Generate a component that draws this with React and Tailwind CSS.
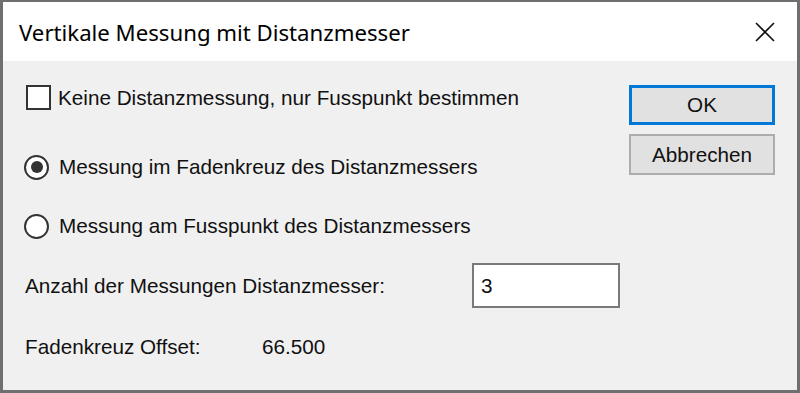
import { useState } from "react";

function Radio({ checked, onClick, children }) {
  return (
    <div className="flex items-center h-[26px] cursor-default" onClick={onClick}>
      <div className="ml-[21px] w-[25px] h-[25px] rounded-full border-2 border-[#333333] bg-white flex items-center justify-center">
        {checked && <div className="w-[12px] h-[12px] rounded-full bg-[#333333]" />}
      </div>
      <span className="ml-[10px]">{children}</span>
    </div>
  );
}

function App() {
  const [keineDistanz, setKeineDistanz] = useState(false);
  const [modus, setModus] = useState("fadenkreuz");
  const [anzahl, setAnzahl] = useState("3");

  return (
    <div className="w-[800px] h-[393px] bg-[#f0f0f0] border-[#6f6f6f] border-t-2 border-l-[3px] border-r-[3px] border-b-[3px] flex flex-col font-['Liberation_Sans',Arial,sans-serif] text-[#111111]">
      <div className="h-[59px] shrink-0 bg-white flex items-center justify-between">
        <span className="ml-[16px] mt-[3px] text-[22.2px] font-['Noto_Sans',sans-serif] text-black">
          Vertikale Messung mit Distanzmesser
        </span>
        <svg className="mr-[22px] mt-[1px]" width="20" height="20" viewBox="0 0 20 20">
          <path d="M1 1 L19 19 M19 1 L1 19" stroke="#111" strokeWidth="1.6" fill="none" />
        </svg>
      </div>

      <div className="flex-1 flex text-[20.7px]">
        <div className="flex-1 flex flex-col pt-[24px]">
          <div
            className="flex items-center h-[25px] cursor-default"
            onClick={() => setKeineDistanz(!keineDistanz)}
          >
            <div className="ml-[23px] w-[25px] h-[25px] border-2 border-[#333333] bg-white flex items-center justify-center text-[16px]">
              {keineDistanz && "✓"}
            </div>
            <span className="ml-[7px]">Keine Distanzmessung, nur Fusspunkt bestimmen</span>
          </div>

          <div className="mt-[44px]">
            <Radio checked={modus === "fadenkreuz"} onClick={() => setModus("fadenkreuz")}>
              Messung im Fadenkreuz des Distanzmessers
            </Radio>
          </div>

          <div className="mt-[33px]">
            <Radio checked={modus === "fusspunkt"} onClick={() => setModus("fusspunkt")}>
              Messung am Fusspunkt des Distanzmessers
            </Radio>
          </div>

          <div className="mt-[24px] flex items-center h-[45px]">
            <span className="ml-[22px] w-[447px]">Anzahl der Messungen Distanzmesser:</span>
            <input
              value={anzahl}
              onChange={(e) => setAnzahl(e.target.value)}
              className="w-[148px] h-[45px] border-2 border-[#7a7a7a] bg-white px-[7px] outline-none text-[20.7px]"
            />
          </div>

          <div className="mt-[26px] flex items-center h-[26px]">
            <span className="ml-[22px] w-[237px]">Fadenkreuz Offset:</span>
            <span>66.500</span>
          </div>
        </div>

        <div className="w-[170px] flex flex-col pt-[24px] pl-[2px]">
          <button className="w-[146px] h-[40px] border-[3px] border-[#0078d7] bg-[#e1e1e1] text-[20.7px]">
            OK
          </button>
          <button className="mt-[9px] w-[146px] h-[41px] border-2 border-[#adadad] bg-[#e1e1e1] text-[20.7px]">
            Abbrechen
          </button>
        </div>
      </div>
    </div>
  );
}

export default App;
